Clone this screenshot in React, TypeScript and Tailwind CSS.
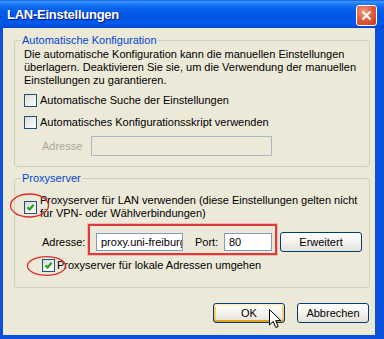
import React from 'react';

const CheckBox = ({ checked }: { checked?: boolean }) => (
  <span className="w-[13px] h-[13px] shrink-0 border border-[#1C5180] bg-linear-to-br from-[#DCDCD7] to-white flex items-center justify-center">
    {checked && (
      <svg width="9" height="9" viewBox="0 0 9 9">
        <path d="M1.5 4.2 L3.6 6.4 L7.6 1.8" stroke="#21A121" strokeWidth="2.2" fill="none" />
      </svg>
    )}
  </span>
);

const XpButton = ({ label, hot, className }: { label: string; hot?: boolean; className?: string }) => (
  <button
    className={
      'h-[20px] rounded-[3px] border border-[#003C74] bg-linear-to-b from-white via-[#F4F3EE] to-[#E3E1D8] text-[11px] leading-[13px] text-black ' +
      (hot ? 'shadow-[inset_0_2px_0_#FFF0CF,inset_0_-2px_0_#E5A01A,inset_2px_0_0_#F9CE75,inset_-2px_0_0_#F9CE75] ' : '') +
      (className ?? '')
    }
  >
    {label}
  </button>
);

export default function App() {
  return (
    <div className="relative w-[384px] h-[339px] flex flex-col bg-[#0A52DE] font-['Liberation_Sans',sans-serif] text-[11px] leading-[13px] text-black">
      {/* title bar */}
      <div className="h-[28px] shrink-0 flex items-start justify-between pl-[7px] pr-[7px] bg-[linear-gradient(to_bottom,#0A5AE0_0%,#3D95FF_6%,#1E7BF8_14%,#0A62EA_30%,#0055E5_60%,#0058EC_85%,#0046CA_100%)]">
        <span className="mt-[7px] text-white font-bold text-[13px] leading-[16px] tracking-[-0.25px] [text-shadow:1px_1px_0_#0A1883]">
          LAN-Einstellungen
        </span>
        <span className="mt-[5px] w-[21px] h-[21px] rounded-[3px] border border-white bg-[radial-gradient(circle_at_35%_30%,#F09C80_0%,#E2603F_45%,#C6381A_100%)] flex items-center justify-center">
          <svg width="11" height="11" viewBox="0 0 11 11">
            <path d="M1.5 1.5 L9.5 9.5 M9.5 1.5 L1.5 9.5" stroke="white" strokeWidth="2.2" />
          </svg>
        </span>
      </div>

      {/* client area */}
      <div className="flex-1 ml-[3px] mr-[9px] mb-[4px] bg-[#ECE9D8] flex flex-col">
        <fieldset className="mt-[6px] ml-[11px] mr-[5px] border border-[#D0D0BF] rounded-[3px] pl-[9px] pr-[4px] pb-[10px]">
          <legend className="-ml-[3px] px-[1px] text-[#0046D5] leading-[13px]">Automatische Konfiguration</legend>
          <p className="mt-[1px]">
            Die automatische Konfiguration kann die manuellen Einstellungen
            <br />
            überlagern. Deaktivieren Sie sie, um die Verwendung der manuellen
            <br />
            Einstellungen zu garantieren.
          </p>
          <div className="mt-[7px] h-[13px] flex items-center gap-[3px]">
            <CheckBox />
            <span>Automatische Suche der Einstellungen</span>
          </div>
          <div className="mt-[9px] h-[13px] flex items-center gap-[3px]">
            <CheckBox />
            <span>Automatisches Konfigurationsskript verwenden</span>
          </div>
          <div className="mt-[7px] pl-[18px] flex items-center">
            <span className="w-[49px] text-[#ACA899]">Adresse</span>
            <span className="w-[181px] h-[20px] border border-[#A9B8C9] bg-[#ECE9D8]" />
          </div>
        </fieldset>

        <fieldset className="mt-[5px] ml-[11px] mr-[5px] border border-[#D0D0BF] rounded-[3px] pl-[9px] pr-[4px] pb-[15px]">
          <legend className="-ml-[3px] px-[1px] text-[#0046D5] leading-[13px]">Proxyserver</legend>
          <div className="mt-[9px] flex items-center gap-[3px]">
            <CheckBox checked />
            <span>
              Proxyserver für LAN verwenden (diese Einstellungen gelten nicht
              <br />
              für VPN- oder Wählverbindungen)
            </span>
          </div>
          <div className="mt-[4px] pl-[18px] flex items-start">
            <span className="mt-[12px] w-[46px]">Adresse:</span>
            <div className="flex items-center border-2 border-[#E0393A] shadow-[0_0_0_1px_rgba(224,57,58,0.25)] pl-[6px] pr-[3px] pt-[7px] pb-[2px]">
              <input
                readOnly
                value="proxy.uni-freiburg.de"
                className="w-[87px] h-[18px] border border-[#7F9DB9] bg-white pl-[4px] text-[11px] leading-[16px] outline-none"
              />
              <span className="ml-[12px] w-[29px]">Port:</span>
              <input
                readOnly
                value="80"
                className="w-[48px] h-[18px] border border-[#7F9DB9] bg-white pl-[4px] text-[11px] leading-[16px] outline-none"
              />
            </div>
            <XpButton label="Erweitert" className="ml-[3px] mt-[8px] w-[82px]" />
          </div>
          <div className="mt-[4px] pl-[18px] h-[13px] flex items-center gap-[2px]">
            <CheckBox checked />
            <span>Proxyserver für lokale Adressen umgehen</span>
          </div>
        </fieldset>

        <div className="mt-[15px] mr-[6px] flex justify-end gap-[12px]">
          <XpButton label="OK" hot className="w-[72px]" />
          <XpButton label="Abbrechen" className="w-[72px]" />
        </div>
      </div>

      {/* annotations */}
      <svg className="absolute left-[9px] top-[192px]" width="41" height="27" viewBox="0 0 41 27">
        <ellipse cx="20.5" cy="13.5" rx="19" ry="11.5" fill="none" stroke="#D9302C" strokeWidth="1.3" />
      </svg>
      <svg className="absolute left-[26px] top-[255px]" width="41" height="22" viewBox="0 0 41 22">
        <ellipse cx="20.5" cy="11" rx="19" ry="9.3" fill="none" stroke="#D9302C" strokeWidth="1.3" />
      </svg>
      <svg className="absolute left-[269px] top-[309px]" width="13" height="20" viewBox="0 0 13 20">
        <path d="M0.5 0.5 L0.5 16 L4.3 12.4 L6.8 18.5 L9.2 17.5 L6.7 11.6 L11.8 11.6 Z" fill="white" stroke="black" strokeWidth="1" strokeLinejoin="miter" />
      </svg>
    </div>
  );
}
